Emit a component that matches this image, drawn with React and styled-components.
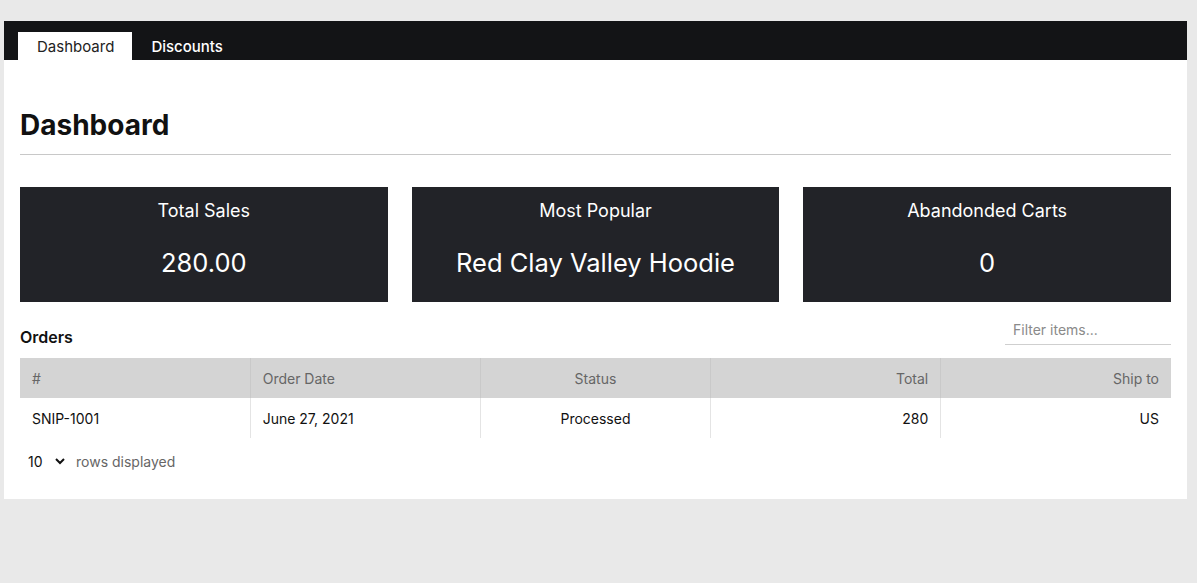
import React from 'react';
import styled, { createGlobalStyle } from 'styled-components';

const GlobalStyle = createGlobalStyle`
    html, body {
        margin: 0;
        padding: 0;
        background: #e9e9e9;
        font-family: Inter, "Liberation Sans", Arial, sans-serif;
    }
    * { box-sizing: border-box; }
`

const orders = [
    { id: 'SNIP-1001', date: 'June 27, 2021', status: 'Processed', total: 280, ship: 'US' }
]

const columns = [
    { key: 'id', label: '#', align: 'left' },
    { key: 'date', label: 'Order Date', align: 'left' },
    { key: 'status', label: 'Status', align: 'center' },
    { key: 'total', label: 'Total', align: 'right' },
    { key: 'ship', label: 'Ship to', align: 'right' },
]

const stats = [
    { title: 'Total Sales', value: '280.00' },
    { title: 'Most Popular', value: 'Red Clay Valley Hoodie' },
    { title: 'Abandonded Carts', value: '0' },
]

export default function App() {
    return (
        <>
            <GlobalStyle />
            <Pagina>
                <Janela>
                    <Navegacao>
                        <Aba ativa>Dashboard</Aba>
                        <Aba>Discounts</Aba>
                    </Navegacao>
                    <Corpo>
                        <Titulo>Dashboard</Titulo>
                        <Cartoes>
                            {stats.map(s =>
                                <Cartao key={s.title}>
                                    <h3>{s.title}</h3>
                                    <p>{s.value}</p>
                                </Cartao>)}
                        </Cartoes>
                        <CabecalhoPedidos>
                            <h4>Orders</h4>
                            <Filtro placeholder="Filter items..." />
                        </CabecalhoPedidos>
                        <Tabela>
                            <thead>
                                <tr>
                                    {columns.map(c => <Th key={c.key} align={c.align}>{c.label}</Th>)}
                                </tr>
                            </thead>
                            <tbody>
                                {orders.map(o =>
                                    <tr key={o.id}>
                                        {columns.map(c => <Td key={c.key} align={c.align}>{o[c.key]}</Td>)}
                                    </tr>)}
                            </tbody>
                        </Tabela>
                        <Rodape>
                            <Seletor defaultValue="10">
                                <option>10</option>
                                <option>25</option>
                                <option>50</option>
                            </Seletor>
                            <span>rows displayed</span>
                        </Rodape>
                    </Corpo>
                </Janela>
            </Pagina>
        </>
    )
}

const Pagina = styled.div`
    min-height: 583px;
    padding: 21px 10px 0 4px;
`
const Janela = styled.div`
    background: #ffffff;
`
const Navegacao = styled.div`
    height: 39px;
    background: #131416;
    display: flex;
    align-items: flex-end;
    padding-left: 14px;
`
const Aba = styled.div`
    height: 28px;
    padding: 0 18px 0 19px;
    display: flex;
    align-items: center;
    padding-top: 1px;
    font-size: 15px;
    font-weight: ${props => props.ativa ? 400 : 500};
    color: ${props => props.ativa ? '#222' : '#fff'};
    background: ${props => props.ativa ? '#fff' : 'transparent'};
`
const Corpo = styled.div`
    padding: 47px 16px 28px 16px;
`
const Titulo = styled.h1`
    margin: 0;
    font-size: 28px;
    font-weight: 700;
    color: #111;
    padding-bottom: 11px;
    border-bottom: 1px solid #c8c8c8;
    line-height: 36px;
`
const Cartoes = styled.div`
    display: grid;
    grid-template-columns: repeat(3, 1fr);
    gap: 24px;
    margin-top: 32px;
`
const Cartao = styled.div`
    height: 115px;
    background: #222328;
    color: #fff;
    text-align: center;
    padding-top: 13px;

    h3 {
        margin: 0;
        font-size: 18px;
        font-weight: 400;
        line-height: 22px;
    }
    p {
        margin: 25px 0 0;
        font-size: 25.5px;
        line-height: 32px;
    }
`
const CabecalhoPedidos = styled.div`
    display: flex;
    justify-content: space-between;
    align-items: flex-start;
    margin-top: 15px;
    height: 41px;

    h4 {
        margin: 0;
        margin-top: 10px;
        font-size: 16px;
        font-weight: 600;
        color: #111;
    }
`
const Filtro = styled.input`
    width: 166px;
    border: none;
    border-bottom: 1px solid #cfcfcf;
    outline: none;
    font-family: inherit;
    font-size: 14px;
    padding: 4px 8px 6px;
    color: #333;

    &::placeholder { color: #8a8a8a; }
`
const Tabela = styled.table`
    width: 100%;
    border-collapse: collapse;
    table-layout: fixed;
    font-size: 14px;
`
const Th = styled.th`
    height: 40px;
    background: #d4d4d4;
    color: #666;
    font-weight: 400;
    padding: 0 12px;
    text-align: ${props => props.align};
    border-left: 1px solid #c9c9c9;
    &:first-child { border-left: none; }
`
const Td = styled.td`
    height: 40px;
    color: #111;
    padding: 0 12px;
    text-align: ${props => props.align};
    border-left: 1px solid #e4e4e4;
    &:first-child { border-left: none; }
`
const Rodape = styled.div`
    display: flex;
    align-items: center;
    gap: 8px;
    margin-top: 14px;
    padding-left: 4px;
    font-size: 14px;
    color: #666;
`
const Seletor = styled.select`
    border: none;
    background: transparent;
    font-family: inherit;
    font-size: 14px;
    color: #111;
    width: 44px;
`
